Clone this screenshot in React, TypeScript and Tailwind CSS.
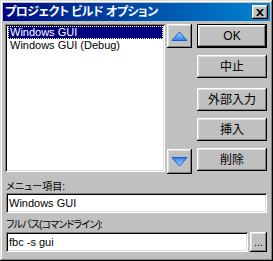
import React from 'react';

const font = "font-['Liberation_Sans','Noto_Sans_CJK_JP',sans-serif] [font-feature-settings:'palt']";
const raised =
  'bg-[#c0c0c0] shadow-[inset_-1px_-1px_#000,inset_1px_1px_#fff,inset_-2px_-2px_#808080,inset_2px_2px_#dfdfdf]';
const sunken =
  'bg-white shadow-[inset_1px_1px_#808080,inset_-1px_-1px_#fff,inset_2px_2px_#000,inset_-2px_-2px_#dfdfdf]';

const Arrow = ({ down }: { down?: boolean }) => (
  <svg width="17" height="11" viewBox="0 0 17 11">
    <defs>
      <linearGradient id={down ? 'gd' : 'gu'} x1="0" y1="0" x2="0" y2="1">
        <stop offset="0" stopColor={down ? '#2c7cf0' : '#a8dcff'} />
        <stop offset="1" stopColor={down ? '#a8dcff' : '#2c7cf0'} />
      </linearGradient>
    </defs>
    <path
      d={down ? 'M1 1.5 H16 L8.5 10 Z' : 'M8.5 1 L16 9.5 H1 Z'}
      fill={`url(#${down ? 'gd' : 'gu'})`}
      stroke="#1a5cc8"
      strokeWidth="1"
      strokeLinejoin="round"
    />
  </svg>
);

const Btn = ({ label, className = '' }: { label: string; className?: string }) => (
  <div className={`${raised} h-[23px] w-[70px] flex items-center justify-center text-[12px] text-black ${className}`}>
    {label}
  </div>
);

const App = () => {
  return (
    <div
      className={`${font} w-[273px] h-[261px] bg-[#c0c0c0] p-[3px] flex flex-col shadow-[inset_-1px_-1px_#000,inset_1px_1px_#dfdfdf,inset_-2px_-2px_#808080,inset_2px_2px_#fff] overflow-hidden`}
    >
      {/* title bar */}
      <div className="h-[18px] flex items-center bg-gradient-to-r from-[#000080] to-[#1084d0] pl-[2px] pr-[2px]">
        <span className="text-white text-[12px] font-bold leading-none tracking-[-0.5px] flex-1 whitespace-nowrap">
          プロジェクト ビルド オプション
        </span>
        <div className={`${raised} w-[16px] h-[14px] flex items-center justify-center`}>
          <svg width="8" height="7" viewBox="0 0 8 7">
            <path d="M0 0h2l2 2 2-2h2L5 3.5 8 7H6L4 5 2 7H0l3-3.5Z" fill="#000" />
          </svg>
        </div>
      </div>

      <div className="pl-[2px] pt-[3px] flex flex-col">
        <div className="flex h-[150px]">
          {/* list */}
          <div className={`${sunken} w-[160px] h-[148px] p-[2px] text-[11px]`}>
            <div className="ml-[1px] h-[13px] bg-[#000080] border border-dotted border-[#ffffc0] text-white leading-[11px] pl-[1px]">
              Windows GUI
            </div>
            <div className="ml-[1px] h-[13px] leading-[13px] pl-[2px] text-black whitespace-nowrap">
              Windows GUI (Debug)
            </div>
          </div>

          {/* arrows */}
          <div className="ml-[2px] w-[25px] flex flex-col justify-between">
            <div className={`${raised} h-[24px] flex items-center justify-center`}>
              <Arrow />
            </div>
            <div className={`${raised} h-[25px] flex items-center justify-center`}>
              <Arrow down />
            </div>
          </div>

          {/* buttons */}
          <div className="ml-[5px] flex flex-col">
            <div className="border border-black h-[24px] w-[70px]">
              <div className={`${raised} h-full w-full flex items-center justify-center text-[12px] text-black`}>OK</div>
            </div>
            <Btn label="中止" className="mt-[7px]" />
            <Btn label="外部入力" className="mt-[10px]" />
            <Btn label="挿入" className="mt-[7px]" />
            <Btn label="削除" className="mt-[7px]" />
          </div>
        </div>

        <div className="mt-[7px] ml-[1px] h-[12px] leading-[12px] text-[10px] text-black">メニュー項目:</div>
        <div className={`${sunken} ml-[1px] w-[261px] h-[20px] flex items-center pl-[3px] text-[11px] text-black`}>
          Windows GUI
        </div>

        <div className="mt-[6px] ml-[1px] h-[12px] leading-[12px] text-[10px] tracking-[-0.8px] text-black">
          フルパス(コマンドライン):
        </div>
        <div className="mt-[1px] ml-[1px] flex gap-[2px]">
          <div className={`${sunken} w-[242px] h-[20px] flex items-center pl-[3px] text-[11px] text-black`}>
            fbc -s gui
          </div>
          <div className={`${raised} w-[17px] h-[20px] flex items-end justify-center pb-[4px] text-[11px] leading-none text-black`}>
            ...
          </div>
        </div>
      </div>
    </div>
  );
};

export default App;
